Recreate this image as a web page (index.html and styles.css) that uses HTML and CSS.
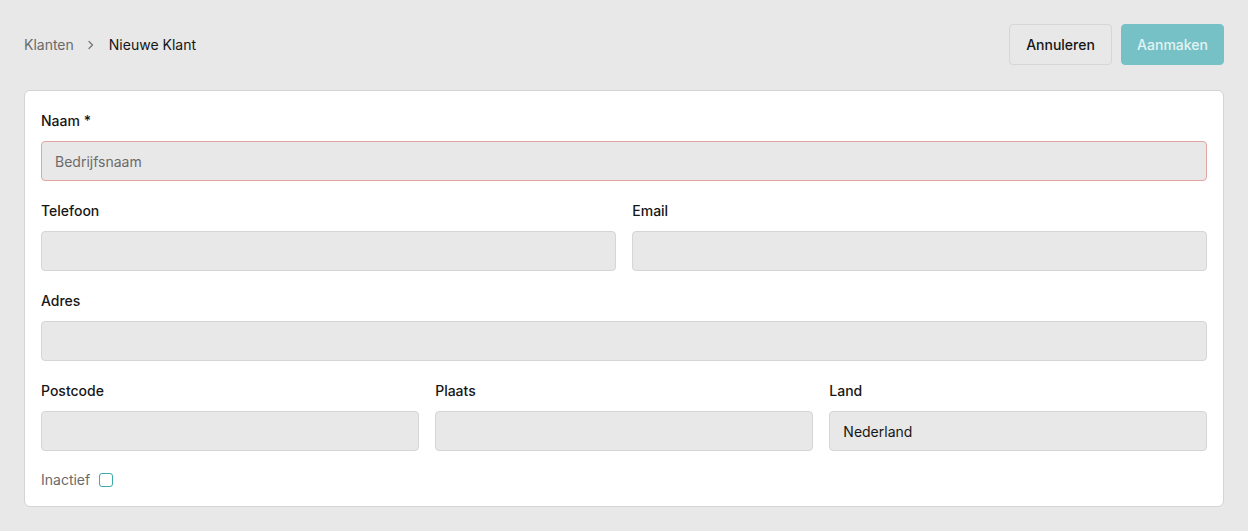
FILE: index.html
```html
<!DOCTYPE html>
<html lang="nl">
<head>
    <meta charset="UTF-8">
    <meta name="viewport" content="width=device-width, initial-scale=1.0">
    <title>Nieuwe Klant</title>
    <link rel="stylesheet" href="styles.css">
</head>
<body>
    <div class="topbar">
        <div class="breadcrumb">
            <span class="crumb">Klanten</span>
            <svg class="chevron" width="8" height="10" viewBox="0 0 8 10"><path d="M2 1.5 L5.5 5 L2 8.5" fill="none" stroke="#777" stroke-width="1.3" stroke-linecap="round" stroke-linejoin="round"/></svg>
            <span class="crumb current">Nieuwe Klant</span>
        </div>
        <div class="actions">
            <button class="btn">Annuleren</button>
            <button class="btn primary">Aanmaken</button>
        </div>
    </div>

    <form class="card">
        <div class="field">
            <label>Naam *</label>
            <input class="input invalid" type="text" placeholder="Bedrijfsnaam">
        </div>
        <div class="row two">
            <div class="field">
                <label>Telefoon</label>
                <input class="input" type="text">
            </div>
            <div class="field">
                <label>Email</label>
                <input class="input" type="text">
            </div>
        </div>
        <div class="field">
            <label>Adres</label>
            <input class="input" type="text">
        </div>
        <div class="row three">
            <div class="field">
                <label>Postcode</label>
                <input class="input" type="text">
            </div>
            <div class="field">
                <label>Plaats</label>
                <input class="input" type="text">
            </div>
            <div class="field">
                <label>Land</label>
                <input class="input" type="text" value="Nederland">
            </div>
        </div>
        <div class="check">
            <span>Inactief</span>
            <span class="box"></span>
        </div>
    </form>
</body>
</html>
```

FILE: styles.css
```css
body {
    margin: 0;
    padding: 24px;
    background-color: #e8e8e8;
    font-family: Inter, "Noto Sans", sans-serif;
    font-size: 14px;
    color: #161616;
}
.topbar {
    display: flex;
    justify-content: space-between;
    align-items: center;
    height: 41px;
    margin-bottom: 25px;
}
.breadcrumb {
    display: flex;
    align-items: center;
    gap: 13px;
}
.crumb {
    color: #6a6a6a;
}
.crumb.current {
    color: #161616;
    margin-left: 1px;
}
.actions {
    display: flex;
    gap: 9px;
}
.btn {
    height: 41px;
    width: 103px;
    font-family: inherit;
    font-size: 14px;
    font-weight: 500;
    color: #161616;
    background-color: #e8e8e8;
    border: 1px solid #d6d6d6;
    border-radius: 4px;
}
.btn.primary {
    background-color: #76c1c6;
    border-color: #76c1c6;
    color: #e3f3f4;
}
.card {
    background-color: #fff;
    border: 1px solid #d4d4d4;
    border-radius: 6px;
    padding: 20px 16px 16px;
    display: flex;
    flex-direction: column;
    gap: 20px;
}
.field {
    display: flex;
    flex-direction: column;
    gap: 10px;
}
.field label {
    font-weight: 500;
    line-height: 20px;
    color: #161616;
}
.row {
    display: grid;
    gap: 16.5px;
}
.row.two {
    grid-template-columns: 1fr 1fr;
}
.row.three {
    grid-template-columns: 1fr 1fr 1fr;
}
.input {
    box-sizing: border-box;
    height: 40px;
    width: 100%;
    margin: 0;
    padding: 0 13px;
    font-family: inherit;
    font-size: 14px;
    color: #161616;
    background-color: #e8e8e8;
    border: 1px solid #d5d5d5;
    border-radius: 4px;
}
.input::placeholder {
    color: #6b6b6b;
}
.input.invalid {
    border-color: #e3a3a3;
}
.check {
    display: flex;
    align-items: center;
    gap: 9px;
    line-height: 20px;
    color: #6a6a6a;
    margin-top: -1px;
}
.box {
    box-sizing: border-box;
    width: 14px;
    height: 14px;
    border: 1.5px solid #3fa7ad;
    border-radius: 3px;
}
```
